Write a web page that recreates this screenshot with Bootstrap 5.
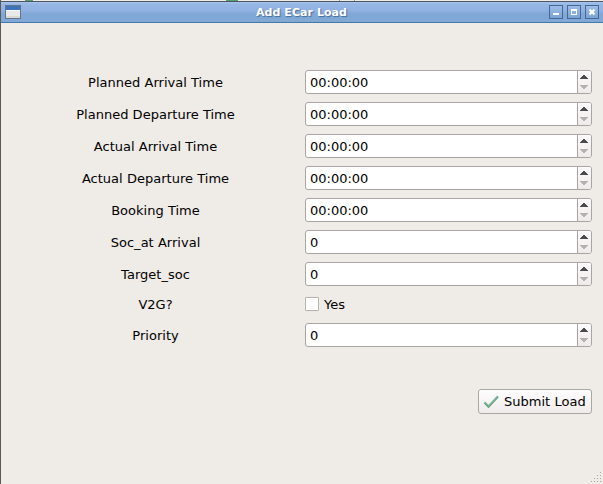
<!DOCTYPE html>
<html lang="en">
<head>
<meta charset="utf-8">
<meta name="viewport" content="width=device-width, initial-scale=1">
<title>Add ECar Load</title>
<link href="https://cdn.jsdelivr.net/npm/bootstrap@5.3.0/dist/css/bootstrap.min.css" rel="stylesheet">
<style>
body{font:13px/16px "DejaVu Sans",sans-serif;letter-spacing:.02px;color:#000;background:#efebe7;height:484px;overflow:hidden}
.win{height:484px;border-left:1px solid #5a5a5a;background:#efebe7}
.behind{height:1px;background:linear-gradient(90deg,#efebe7 24px,#55a06c 24px 32px,#efebe7 32px 225px,#55a06c 225px 237px,#efebe7 237px 338px,#7fae8c 338px 339px,#efebe7 339px 353px,#7fae8c 353px 354px,#efebe7 354px)}
.titlebar{height:22px;border-top:1px solid #4c5563;border-bottom:1px solid #4578ab;background:linear-gradient(#a9c5ee 0,#98b7e5 2px,#8fb1e1 9px,#7fa7d5 12px,#82a9d6 100%);padding:0 4px 0 4px}
.caption-text{font-size:11px;font-weight:700;letter-spacing:.06px;color:#fff;text-shadow:1px 1px 1px #476b98;line-height:18px;padding:2px 1px 0 0}
.winbtn{width:14px;height:14px;border:1px solid #456894;background:linear-gradient(#9dbde8,#7ca3d4);padding:0}
.titlebar svg{display:block}
.form-area{padding:47px 11px 0 10px}
.form-grid{display:grid;grid-template-columns:288px 287px;column-gap:6px;row-gap:8px}
.form-grid label.cap{text-align:center;height:24px;padding:5px 0 0 1px}
.form-grid label.cap.flat{height:21px;padding-top:3px}
.spin{height:24px;border:1px solid #a9a5a2;border-radius:3px;background:#fff;overflow:hidden}
.spin input{border:0;outline:0;padding:2px 0 0 4px;min-width:0;color:#000;font:inherit;letter-spacing:0;background:transparent}
.steps{width:14px;border-left:1px solid #a9a5a2;background:linear-gradient(#fdfbfc,#efe9ea)}
.steps svg{display:block;margin-left:-1px}
.check-row{height:21px}
.check-row .form-check-input{width:14px;height:14px;margin:3px 5px 0 0;border:1px solid #b8b4b0;border-radius:1px;background-color:#fff}
.check-row label{padding-top:3px}
.submit-btn{height:25px;width:114px;margin-top:42px;padding:0 0 0 4px;border:1px solid #aaa6a3;border-radius:3px;background:linear-gradient(#fefdfd,#f0ebeb);font-size:13px;line-height:16px;letter-spacing:.02px;color:#000}
.submit-btn svg{margin-right:5px}
.grip{position:absolute;right:1px;bottom:1px}
</style>
<script src="https://cdn.jsdelivr.net/npm/bootstrap@5.3.0/dist/js/bootstrap.bundle.min.js"></script>
</head>
<body>
<svg class="d-none"><symbol id="arrows" viewBox="0 0 14 22"><path d="M6 4h2v1h1v1h1v1h1v1H3V7h1V6h1V5h1z" fill="#4b4b4b"/><path d="M3 14h8v1h-1v1H9v1H8v1H6v-1H5v-1H4v-1H3z" fill="#b5b1b0"/></symbol></svg>
<main class="win position-relative">
<div class="behind"></div>
<header class="titlebar d-flex align-items-center justify-content-between">
<svg width="70" height="20"><rect x=".5" y="3.5" width="15" height="13" fill="#e9e9e8" stroke="#65758b"/><path d="M1 4h14v4H1z" fill="#3e73b7"/><path d="M1 8h14v1H1z" fill="#fafafa"/><path d="M1 14h14v2H1z" fill="#d8d8d7"/></svg>
<div class="caption-text">Add ECar Load</div>
<div class="winbtns d-flex justify-content-end gap-1" style="width:70px">
<button class="winbtn" aria-label="Minimize"><svg width="12" height="12"><path d="M3 7h6v2H3z" fill="#fff"/></svg></button>
<button class="winbtn" aria-label="Maximize"><svg width="12" height="12"><path d="M3 3h6v6H3zM4 5v3h4V5z" fill="#fff" fill-rule="evenodd"/></svg></button>
<button class="winbtn" aria-label="Close"><svg width="12" height="12"><path d="M3.5 3.5l5 5m0-5l-5 5" stroke="#fff" stroke-width="2.2"/></svg></button>
</div>
</header>
<form class="form-area">
<div class="form-grid">
<label class="cap" for="a">Planned Arrival Time</label><div class="spin d-flex"><input id="a" class="flex-grow-1" value="00:00:00"><span class="steps"><svg width="14" height="22"><use href="#arrows"/></svg></span></div>
<label class="cap" for="b">Planned Departure Time</label><div class="spin d-flex"><input id="b" class="flex-grow-1" value="00:00:00"><span class="steps"><svg width="14" height="22"><use href="#arrows"/></svg></span></div>
<label class="cap" for="c">Actual Arrival Time</label><div class="spin d-flex"><input id="c" class="flex-grow-1" value="00:00:00"><span class="steps"><svg width="14" height="22"><use href="#arrows"/></svg></span></div>
<label class="cap" for="d">Actual Departure Time</label><div class="spin d-flex"><input id="d" class="flex-grow-1" value="00:00:00"><span class="steps"><svg width="14" height="22"><use href="#arrows"/></svg></span></div>
<label class="cap" for="e">Booking Time</label><div class="spin d-flex"><input id="e" class="flex-grow-1" value="00:00:00"><span class="steps"><svg width="14" height="22"><use href="#arrows"/></svg></span></div>
<label class="cap" for="f">Soc_at Arrival</label><div class="spin d-flex"><input id="f" class="flex-grow-1" value="0"><span class="steps"><svg width="14" height="22"><use href="#arrows"/></svg></span></div>
<label class="cap" for="g">Target_soc</label><div class="spin d-flex"><input id="g" class="flex-grow-1" value="0"><span class="steps"><svg width="14" height="22"><use href="#arrows"/></svg></span></div>
<label class="cap flat" for="h">V2G?</label><div class="check-row d-flex align-items-start"><input id="h" type="checkbox" class="form-check-input"><label for="h">Yes</label></div>
<label class="cap" for="i">Priority</label><div class="spin d-flex"><input id="i" class="flex-grow-1" value="0"><span class="steps"><svg width="14" height="22"><use href="#arrows"/></svg></span></div>
</div>
<div class="d-flex justify-content-end">
<button type="button" class="btn submit-btn d-flex align-items-center"><svg width="16" height="16"><path d="M1.5 8.5l4 4L15 2.5" fill="none" stroke="#65a283" stroke-width="2.3"/><path d="M2 8.5l3.5 3.3L14.5 2.7" fill="none" stroke="#94c8ab" stroke-width=".8"/></svg><span class="text-nowrap">Submit Load</span></button>
</div>
</form>
<svg class="grip" width="12" height="12" fill="#aaa6a1" shape-rendering="crispEdges"><path d="M10 1h1v1h-1zM7 4h1v1H7zM10 4h1v1h-1zM4 7h1v1H4zM7 7h1v1H7zM10 7h1v1h-1zM1 10h1v1H1zM4 10h1v1H4zM7 10h1v1H7zM10 10h1v1h-1z"/></svg>
</main>
</body>
</html>
